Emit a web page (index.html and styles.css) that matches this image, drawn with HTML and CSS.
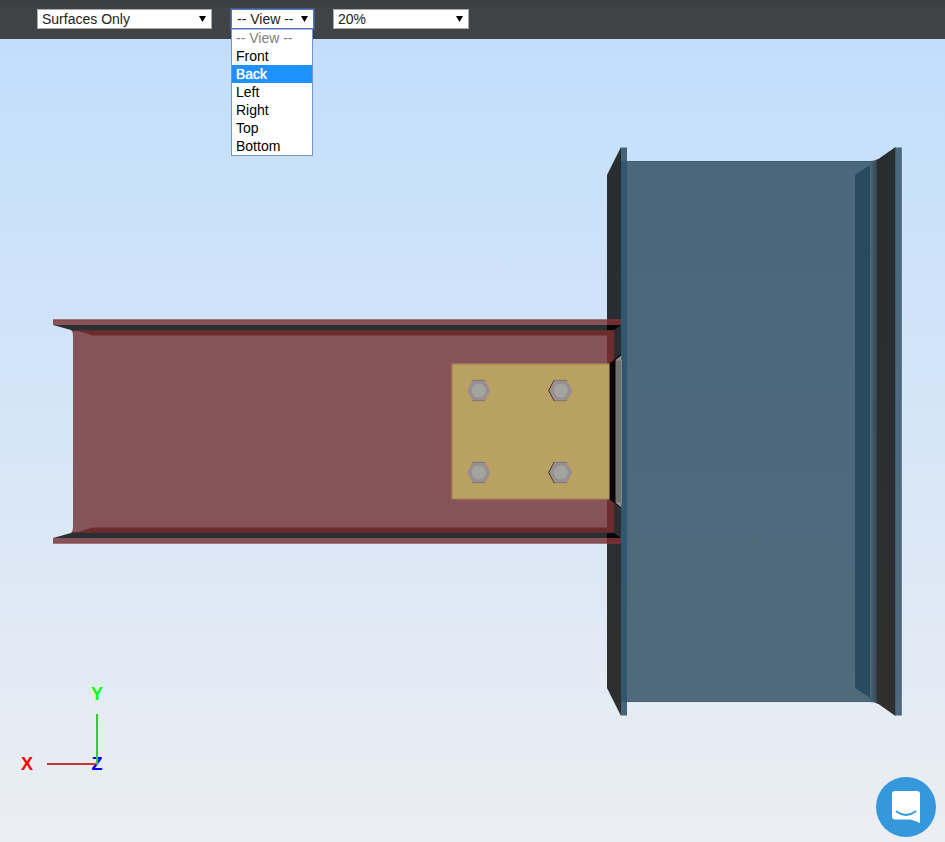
FILE: index.html
```html
<!DOCTYPE html>
<html lang="en">
<head>
<meta charset="utf-8">
<title>Connection Viewer</title>
<link rel="stylesheet" href="styles.css">
</head>
<body>
<header class="toolbar">
  <div class="picker picker-wide">
    <select aria-label="Display mode"><option>Surfaces Only</option></select>
  </div>
  <div class="picker picker-view is-open">
    <select aria-label="View"><option>-- View --</option></select>
    <ul class="menu" role="listbox" aria-label="View options">
      <li><button type="button" role="option" disabled>-- View --</button></li>
      <li><button type="button" role="option">Front</button></li>
      <li><button type="button" role="option" aria-selected="true">Back</button></li>
      <li><button type="button" role="option">Left</button></li>
      <li><button type="button" role="option">Right</button></li>
      <li><button type="button" role="option">Top</button></li>
      <li><button type="button" role="option">Bottom</button></li>
    </ul>
  </div>
  <div class="picker picker-zoom">
    <select aria-label="Zoom"><option>20%</option></select>
  </div>
</header>
<main class="viewport">
  <svg class="scene" viewBox="0 39 945 803" role="img" aria-label="Beam to column connection">
    <defs>
      <linearGradient id="web" x1="0" y1="0" x2="0" y2="1">
        <stop offset="0" stop-color="#4a677b"/><stop offset="1" stop-color="#506a7b"/>
      </linearGradient>
      <linearGradient id="fillet" x1="0" y1="0" x2="1" y2="0">
        <stop offset="0" stop-color="#4a6779"/><stop offset="1" stop-color="#303e48"/>
      </linearGradient>
      <linearGradient id="dark" x1="0" y1="0" x2="0" y2="1">
        <stop offset="0" stop-color="#282d30"/><stop offset="1" stop-color="#2f2f2f"/>
      </linearGradient>
      <g id="bolt">
        <path d="M-11.7 0L-6.3-10.5H6.2L11.7 0L6.2 10.5H-6.3Z" fill="#9b8e91"/>
        <path d="M-6.3 10.2H6.2M-6.3-10.2H6.2" stroke="#705f61" stroke-width=".6"/>
        <circle r="7" fill="#a3a3a0"/>
      </g>
    </defs>

    <!-- column -->
    <path d="M621 147L607 175V688L621 716Z" fill="url(#dark)"/>
    <path d="M627 161H870V702H627Z" fill="url(#web)"/>
    <path d="M870 161Q875 161 878 159V704Q875 702 870 702Z" fill="url(#fillet)"/>
    <path d="M627 161.500H871M627 701.500H871" stroke="#38576b" stroke-opacity=".6"/>
    <path d="M855 175L870 165V698L855 688Z" fill="#2a4b5f"/>
    <path d="M877 160L895.500 147V716L877 703Z" fill="url(#dark)"/>
    <path d="M895 147.500H901.500V715.500H895Z" fill="#4b697d"/>
    <path d="M895.500 147.500V715.500M901.200 147.500V715.500" stroke="#3a586b" stroke-width=".7"/>
    <path d="M621 147.500H627V715.500H621Z" fill="#466479"/>
    <path d="M621 161H627V702H621Z" fill="#2f5870"/>

    <!-- beam -->
    <path d="M71 330H607V533H71Q73 531 73 527V336Q73 332 71 330Z" fill="#865358"/>
    <path d="M73.500 335V528" stroke="#74616b" stroke-width=".8"/>
    <path d="M78 331H614V335.500H93Z" fill="#6c2b2d"/>
    <path d="M78 532H614V527.500H93Z" fill="#6c2b2d"/>
    <path d="M607 331H614V532H607Z" fill="#6f2c2f"/>
    <path d="M53 325H616L614 330.500H74L71 330Z" fill="#2b2f31"/>
    <path d="M53 538H616L614 532.500H74L71 533Z" fill="#2b2f31"/>
    <path d="M72 330.500H614M72 532.500H614" stroke="#552e31"/>
    <path d="M53 319.500H607V325H53ZM53 538H607V543.500H53Z" fill="#865358"/>
    <path d="M607 319.500H621V325H607ZM607 538H621V543.500H607Z" fill="#722d30"/>
    <path d="M53 320H621M53 543H621" stroke="#8b3f43" stroke-width=".8"/>
    <path d="M607 325H621L614 330H607ZM607 538H621L614 533H607Z" fill="#050606"/>

    <!-- shear plate -->
    <path d="M609 364L621 354V508L609 499Z" fill="#0b0507"/>
    <path d="M615.500 360L621.500 355V507.500L615.500 503Z" fill="#707070"/>
    <path d="M616 360.500L621 356V360.500ZM616 502.500H621V507Z" fill="#929292"/>
    <path d="M621.500 360V503" stroke="#899196" stroke-width=".8"/>
    <path d="M451.500 363.500H609.500V499.500H451.500Z" fill="#b9a261"/>
    <path d="M609 364H452V499H609" fill="none" stroke="#94654f" stroke-width=".7"/>

    <!-- bolts -->
    <path d="M554.500 380L548.900 390.500L554.500 401M554.500 462L548.900 472.500L554.500 483" fill="none" stroke="#291b1c" stroke-width="1.200"/>
    <use href="#bolt" x="478.800" y="390.500"/>
    <use href="#bolt" x="560.800" y="390.500"/>
    <use href="#bolt" x="478.800" y="472.500"/>
    <use href="#bolt" x="560.800" y="472.500"/>
  </svg>

  <svg class="axes" viewBox="0 0 100 100" role="img" aria-label="Axes">
    <text x="82" y="89" fill="#0000ff">Z</text>
    <path d="M32 83H82" stroke="#cc3333" stroke-width="2"/>
    <path d="M82 33V83" stroke="#33cc33" stroke-width="2"/>
    <text x="82" y="19" fill="#00ff00">Y</text>
    <text x="12" y="89" fill="#ff0000">X</text>
  </svg>

  <button class="chat" type="button" aria-label="Open chat">
    <svg viewBox="0 0 60 60" aria-hidden="true">
      <path d="M19 14H41Q44 14 44 17V46Q38 43 34 42.500H19Q16 42.500 16 39.500V17Q16 14 19 14Z" fill="#fff"/>
      <path d="M20.500 34.500Q30 41.500 39.500 34.500" fill="none" stroke="#3598dc" stroke-width="2" stroke-linecap="round"/>
    </svg>
  </button>
</main>
</body>
</html>
```
FILE: styles.css
```css
* {
  box-sizing: border-box;
}

body {
  margin: 0;
  min-height: 100vh;
  display: flex;
  flex-direction: column;
  font-family: "Liberation Sans", Arial, sans-serif;
  font-size: 14px;
}

.toolbar {
  display: flex;
  align-items: flex-start;
  gap: 19px;
  padding: 9px 36px 10px 37px;
  background: linear-gradient(#3a3e40, #414446 9px);
}

.picker {
  position: relative;
  height: 20px;
}

.picker-wide {
  width: 175px;
}

.picker-view {
  width: 83px;
}

.picker-zoom {
  width: 136px;
}

.picker::after {
  content: "";
  position: absolute;
  right: 6px;
  top: 7px;
  width: 7px;
  height: 6px;
  background: #000;
  clip-path: polygon(0 0, 100% 0, 50% 100%);
  pointer-events: none;
}

.picker select {
  display: block;
  width: 100%;
  height: 20px;
  padding: 0 4px;
  border: 1px solid #a9a9a9;
  border-radius: 0;
  background: #fff;
  color: #222;
  font: inherit;
  appearance: none;
}

.picker.is-open select {
  position: relative;
  z-index: 2;
  padding: 0 5px;
  border-color: #4d78bc;
  box-shadow: 0 0 0 1px #4d78bc80;
}

.is-open::after {
  z-index: 3;
}

.menu {
  position: absolute;
  z-index: 1;
  top: 19px;
  left: 0;
  width: 82px;
  margin: 0;
  padding: 0;
  border: 1px solid #7296d3;
  background: #fff;
  list-style: none;
}

.menu button {
  display: block;
  width: 100%;
  height: 18px;
  padding: 0 4px;
  border: 0;
  background: none;
  color: #000;
  font: inherit;
  line-height: 18px;
  text-align: left;
}

.menu button:disabled {
  color: #808080;
}

.menu [aria-selected="true"] {
  background: #1e90ff;
  color: #fff;
  text-shadow: 0 0 1px #fff;
}

.viewport {
  position: relative;
  flex: 1;
  display: flex;
  background: linear-gradient(#c2defc, #ebeef2);
}

.scene {
  flex: 1;
  min-width: 0;
  width: 100%;
}

.axes {
  position: absolute;
  left: 15px;
  bottom: 61px;
  width: 100px;
  height: 100px;
  font: bold 18px "Liberation Sans", Arial, sans-serif;
  text-anchor: middle;
}

.chat {
  position: absolute;
  right: 9px;
  bottom: 5px;
  width: 60px;
  height: 60px;
  padding: 0;
  border: 0;
  border-radius: 50%;
  background: #3598dc;
}

.chat svg {
  display: block;
}
```
